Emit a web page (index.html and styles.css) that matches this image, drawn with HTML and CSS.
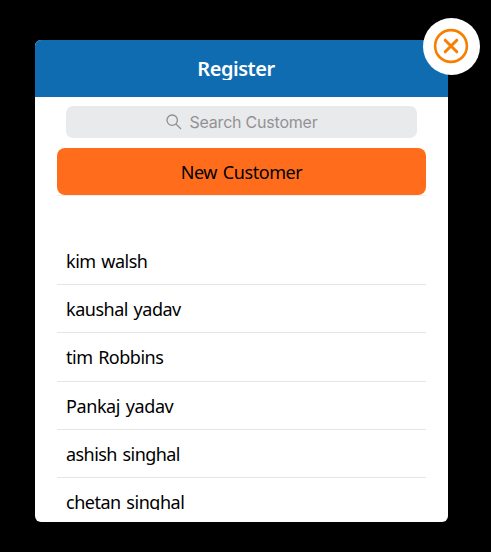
FILE: index.html
```html
<!DOCTYPE html>
<html lang="en">
<head>
<meta charset="utf-8">
<title>Register</title>
<link rel="stylesheet" href="styles.css">
</head>
<body>
<main class="dialog">
  <header class="header"><h1 class="title">Register</h1></header>
  <div class="search">
    <svg class="search-icon" viewBox="0 0 16 16"><circle cx="6.2" cy="6.2" r="5.2"/><path d="M10 10l5 5"/></svg>
    <span class="search-text">Search Customer</span>
  </div>
  <div class="new-row"><button class="new">New Customer</button></div>
  <ul class="list">
    <li class="row">kim walsh</li>
    <li class="row">kaushal yadav</li>
    <li class="row">tim Robbins</li>
    <li class="row row-wide">Pankaj yadav</li>
    <li class="row row-tight">ashish singhal</li>
    <li class="row">chetan singhal</li>
  </ul>
  <button class="close" aria-label="Close">
    <svg class="close-icon" viewBox="0 0 36 36"><circle cx="18" cy="18" r="15.9"/><path class="cross" d="M12.2 12.2l11.6 11.6M23.8 12.2L12.2 23.8"/></svg>
  </button>
</main>
</body>
</html>
```
FILE: styles.css
```css
* { box-sizing: border-box; }
body {
  margin: 0;
  height: 552px;
  padding: 40px 43px 0 35px;
  background: #000;
  font-family: "Noto Sans", sans-serif;
  overflow: hidden;
}
.dialog {
  position: relative;
  width: 413px;
  height: 481.5px;
  background: #fff;
  border-radius: 6px;
}
.header {
  height: 57px;
  display: flex;
  justify-content: center;
  background: #106cb1;
  border-radius: 6px 6px 0 0;
}
.title {
  margin: 16px 0 0;
  padding-right: 11px;
  height: 24px;
  overflow: hidden;
  color: #fff;
  font-size: 20px;
  font-weight: 600;
  letter-spacing: -0.45px;
  line-height: 26px;
}
.search {
  margin: 9px 31px 0;
  height: 32px;
  display: flex;
  align-items: center;
  justify-content: center;
  gap: 8px;
  background: #e9eaec;
  border-radius: 7px;
  color: #929294;
  font: 16px/32px Inter, sans-serif;
  letter-spacing: -0.22px;
}
.search-icon {
  width: 16px;
  height: 16px;
  fill: none;
  stroke: #8e8e91;
  stroke-width: 1.3;
}
.new-row {
  height: 48px;
  margin: 10px 22px 0;
  border-bottom: 1px solid #efefef;
}
.new {
  display: block;
  width: 100%;
  height: 47px;
  padding: 0;
  border: 0;
  border-radius: 8px;
  background: #ff6d1c;
  color: #000;
  font: 18px/49px "Noto Sans", sans-serif;
  letter-spacing: -0.42px;
  word-spacing: 1.5px;
}
.list {
  list-style: none;
  margin: 41px 22px 0;
  padding: 0;
  height: 273px;
  overflow: hidden;
  font-size: 18px;
  letter-spacing: -0.48px;
  word-spacing: 1.4px;
  color: #000;
}
.row {
  height: 48.2px;
  padding-left: 9px;
  line-height: 49.5px;
  border-bottom: 1px solid #e5e5e5;
  white-space: nowrap;
}
.row-wide { letter-spacing: -0.4px; }
.row-tight { letter-spacing: -0.55px; }
.close {
  position: absolute;
  left: 388px;
  top: -22px;
  width: 57px;
  height: 57px;
  padding: 0 1px 1px 0;
  border: 0;
  border-radius: 50%;
  background: #fff;
  display: flex;
  align-items: center;
  justify-content: center;
}
.close-icon {
  width: 36px;
  height: 36px;
  fill: none;
  stroke: #f77f00;
  stroke-width: 2.6;
  stroke-linecap: round;
}
.cross { stroke-width: 3; }
```
